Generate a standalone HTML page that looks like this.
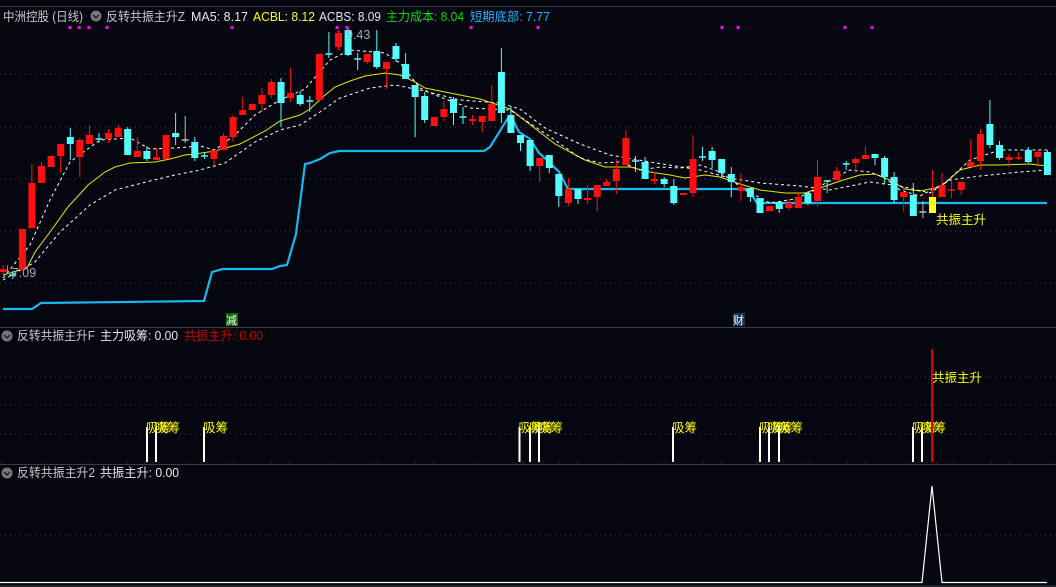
<!DOCTYPE html>
<html><head><meta charset="utf-8"><style>
html,body{margin:0;padding:0;background:#05060f;width:1056px;height:587px;overflow:hidden}
svg{display:block}
text{font-family:"Liberation Sans","Noto Sans CJK SC",sans-serif;font-size:12.5px}
</style></head><body>
<svg id="s" width="1056" height="587" xmlns="http://www.w3.org/2000/svg">
<rect width="1056" height="587" fill="#05060f"/>
<line x1="0" y1="6.5" x2="1056" y2="6.5" stroke="#3a3d44"/>
<g stroke="#444" stroke-dasharray="1,4">
<line x1="0" y1="74" x2="1056" y2="74"/><line x1="0" y1="127" x2="1056" y2="127"/>
<line x1="0" y1="179" x2="1056" y2="179"/><line x1="0" y1="231" x2="1056" y2="231"/>
<line x1="0" y1="283" x2="1056" y2="283"/>
<line x1="0" y1="377" x2="1056" y2="377"/><line x1="0" y1="405" x2="1056" y2="405"/>
<line x1="0" y1="434" x2="1056" y2="434"/><line x1="0" y1="535" x2="1056" y2="535"/>
</g>
<line x1="0" y1="462.5" x2="1056" y2="462.5" stroke="#b00" stroke-dasharray="1,8"/>
<line x1="0" y1="327.5" x2="1056" y2="327.5" stroke="#3a3d44"/>
<line x1="0" y1="464.5" x2="1056" y2="464.5" stroke="#3a3d44"/>
<line x1="0" y1="586" x2="1056" y2="586" stroke="#3a3d44"/>
<g id="g"></g>
<!-- header -->
<circle cx="96" cy="16" r="5.5" fill="#777"/><path d="M93 15 l3 3 l3 -3" stroke="#222" stroke-width="1.5" fill="none"/>
<text x="3" y="21" fill="#c8c8c8" textLength="80" lengthAdjust="spacingAndGlyphs">中洲控股 (日线)</text>
<text x="106" y="21" fill="#c8c8c8" textLength="79" lengthAdjust="spacingAndGlyphs">反转共振主升Z</text>
<text x="191" y="21" fill="#e8e8e8" textLength="57" lengthAdjust="spacingAndGlyphs">MA5: 8.17</text>
<text x="253" y="21" fill="#ffff00" textLength="62" lengthAdjust="spacingAndGlyphs">ACBL: 8.12</text>
<text x="319" y="21" fill="#e8e8e8" textLength="62" lengthAdjust="spacingAndGlyphs">ACBS: 8.09</text>
<text x="386" y="21" fill="#00dd00" textLength="78" lengthAdjust="spacingAndGlyphs">主力成本: 8.04</text>
<text x="470" y="21" fill="#22b0ff" textLength="80" lengthAdjust="spacingAndGlyphs">短期底部: 7.77</text>
<text x="346" y="39" fill="#aaa">9.43</text>
<text x="3" y="277" fill="#aaa">└7.09</text>
<rect x="226" y="313" width="12" height="13" fill="#0a6a0a"/><text x="226" y="324" fill="#fff" style="font-size:11px">减</text>
<rect x="733" y="313" width="12" height="13" fill="#10305a"/><text x="733" y="324" fill="#fff" style="font-size:11px">财</text>
<text x="936" y="224" fill="#ffff00">共振主升</text>
<circle cx="7" cy="336" r="5.5" fill="#777"/><path d="M4 335 l3 3 l3 -3" stroke="#222" stroke-width="1.5" fill="none"/>
<text x="17" y="340" fill="#c8c8c8" textLength="78" lengthAdjust="spacingAndGlyphs">反转共振主升F</text>
<text x="100" y="340" fill="#e8e8e8" textLength="78" lengthAdjust="spacingAndGlyphs">主力吸筹: 0.00</text>
<text x="184" y="340" fill="#cc0000" textLength="79" lengthAdjust="spacingAndGlyphs">共振主升: 0.00</text>
<circle cx="7" cy="473" r="5.5" fill="#777"/><path d="M4 472 l3 3 l3 -3" stroke="#222" stroke-width="1.5" fill="none"/>
<text x="17" y="477" fill="#c8c8c8" textLength="78" lengthAdjust="spacingAndGlyphs">反转共振主升2</text>
<text x="100" y="477" fill="#e8e8e8" textLength="79" lengthAdjust="spacingAndGlyphs">共振主升: 0.00</text>
<line x1="932" y1="349" x2="932" y2="462" stroke="#dd0000" stroke-width="2"/>
<text x="932" y="382" fill="#ffff00">共振主升</text>
<polyline points="0,582.5 922,582.5 932,486 942,582.5 1047,582.5" fill="none" stroke="#fff" stroke-width="1.2"/>
</svg>
<script>
var g=document.getElementById('g'),h='';
function pl(p,c,w,d){h+='<polyline fill="none" stroke="'+c+'" stroke-width="'+w+'" '+(d?'stroke-dasharray="'+d+'" ':'')+'points="'+p.map(function(a){return a.join(',')}).join(' ')+'"/>';}
pl([[3,309],[32,309],[41,303],[204,301],[212,272],[223,269],[272,269],[280,266],[287,265],[296,234],[305,164],[310,163],[320,159],[330,153],[339,151],[484,151],[490,147],[508,118],[511,116],[519,132],[530,139],[539,153],[547,160],[559,172],[568,189],[748,189],[757,203],[1047,203]],'#1ab8f0',2.2);
pl([[3,275],[27,268],[35,252],[50,232],[68,207],[88,185],[105,172],[115,167],[130,163],[155,162],[170,159],[185,155],[195,154],[215,151],[240,144],[265,131],[280,121],[300,115],[310,109],[325,95],[335,87],[350,81],[365,76],[385,73],[400,75],[415,82],[425,88],[440,91],[460,95],[480,99],[495,104],[510,109],[528,123],[555,144],[585,160],[605,167],[630,167],[650,172],[670,175],[685,178],[705,175],[720,177],[740,184],[760,190],[785,193],[805,193],[820,188],[840,181],[860,175],[875,174],[890,180],[905,189],[920,191],[940,187],[960,170],[980,165],[1000,165],[1030,164],[1047,166]],'#e8e800',1);
pl([[3,278],[30,245],[50,200],[70,162],[100,140],[130,138],[150,149],[175,148],[200,146],[215,150],[235,135],[255,115],[280,100],[305,89],[330,60],[350,50],[385,53],[400,63],[420,88],[440,97],[470,108],[510,110],[528,122],[555,140],[580,158],[600,163],[620,162],[640,170],[660,167],[680,168],[700,165],[720,172],[745,190],[770,203],[795,199],[815,190],[830,180],[850,170],[870,172],[885,178],[900,190],[920,196],[945,183],[970,160],[1000,150],[1047,150]],'#fff',1,'3,3');
pl([[3,280],[35,262],[60,232],[90,205],[115,190],[150,181],[175,175],[200,170],[225,163],[255,142],[280,130],[300,125],[320,112],[340,98],[370,88],[395,85],[420,90],[460,100],[500,103],[520,109],[545,128],[580,144],[610,155],[650,162],[700,170],[730,178],[760,183],[800,186],[830,190],[870,182],[900,186],[930,193],[950,180],[980,176],[1020,172],[1047,170]],'#fff',1,'3,3');
var D=[['r',269,272,265,274],['c',275,275,271,279],['r',229,270],['r',183,228,164,228],['r',166,183,162,183],['r',156,167,155,167],['r',144,156,144,173],['c',137,144,128,160],['r',140,157,138,177],['r',135,144,125,144],['c',139,139,133,143],['r',133,139,129,143],['r',128,137,125,137],['c',129,155,127,155],['r',151,157,137,157],['c',151,159,146,161],['r',157,160,148,160],['r',135,159],['c',133,137,113,145],['g',140,140,116,143],['c',142,158,137,161],['c',156,156,152,159],['r',150,159,150,165],['r',136,150,133,150],['r',117,137,115,142],['r',110,115,97,115],['r',104,110],['r',95,104,88,112],['r',82,95,79,98],['c',82,103,78,127],['r',93,98,68,102],['c',95,104,91,106],['c',101,101,96,112],['r',54,100,54,102],['c',54,54,32,58],['r',33,47,30,50],['c',30,55,27,56],['c',59,59,53,70],['r',54,62,54,64],['c',51,67,30,69],['r',62,69,62,89],['c',46,59,43,62],['c',64,79,53,79],['c',85,97,85,137],['c',96,120,92,123],['r',117,126],['r',109,117,101,121],['c',99,113,97,125],['c',117,117,107,124],['r',119,121,115,125],['r',116,122,116,132],['r',104,121,85,121],['c',72,113,48,123],['c',115,133,106,133],['c',135,143,135,151],['c',140,166,140,171],['r',158,166,158,182],['c',155,168,155,173],['c',174,196,174,207],['r',189,203,178,206],['c',189,199,189,204],['r',198,200,185,204],['r',185,197,185,211],['r',182,186,179,186],['r',169,181,159,194],['r',138,165,130,165],['c',161,161,156,172],['c',162,179,157,179],['r',179,181,172,184],['c',179,184,177,187],['c',186,203,179,205],['r',193,195],['r',159,193,135,197],['c',157,157,147,161],['c',151,160,147,168],['c',159,173,159,178],['c',174,182,167,197],['r',187,191,173,201],['c',188,197,188,202],['c',198,213,198,213],['r',206,211],['c',202,209,202,213],['r',203,208,199,210],['r',197,208,192,208],['c',193,203,193,205],['r',177,201,160,207],['c',181,181,180,193],['r',171,180,167,180],['c',164,164,161,170],['r',159,163,157,173],['r',155,159,146,159],['c',154,158,154,165],['c',158,177,156,184],['c',177,200,172,203],['r',192,197,188,212],['c',195,216,183,216],['g',212,212,201,218],['y',197,213,170,213],['r',185,197,173,197],['r',190,190,180,198],['r',182,190,182,195],['r',162,167,139,167],['r',134,161,129,170],['c',124,145,100,148],['c',145,158,141,160],['r',157,160,154,167],['r',158,159,152,160],['c',150,162,147,163],['r',152,157,150,167],['c',152,175,150,175]];
var C={r:'#ff1010',c:'#54fcfc',g:'#bbb',y:'#ffff00'};
D.forEach(function(d,i){var x=3.2+9.58*i,c=C[d[0]],t=d[1],b=d[2],wt=d[3]||t,wb=d[4]||b;
var wc=d[0]=='y'?'#ff1010':c;
h+='<line x1="'+x.toFixed(1)+'" y1="'+wt+'" x2="'+x.toFixed(1)+'" y2="'+wb+'" stroke="'+wc+'" stroke-width="1"/>';
var bh=Math.max(b-t,1.5);h+='<rect x="'+(x-3.5).toFixed(1)+'" y="'+(b-t<1.5?t-0.75:t)+'" width="7" height="'+bh+'" fill="'+c+'"/>';});
[70,79,89,107,232,337,347,471,538,722,738,845,872].forEach(function(x){h+='<rect x="'+(x-1.5)+'" y="26" width="3" height="3" fill="#ff00ff"/>';});
[147,156,204,519.5,530,539,673,760,769,779,913,922].forEach(function(x){h+='<rect x="'+(x-1)+'" y="427" width="2" height="35" fill="#fff"/><text x="'+(x-1)+'" y="432" fill="#ffff00">吸筹</text>';});
g.innerHTML=h;
</script>
</body></html>
